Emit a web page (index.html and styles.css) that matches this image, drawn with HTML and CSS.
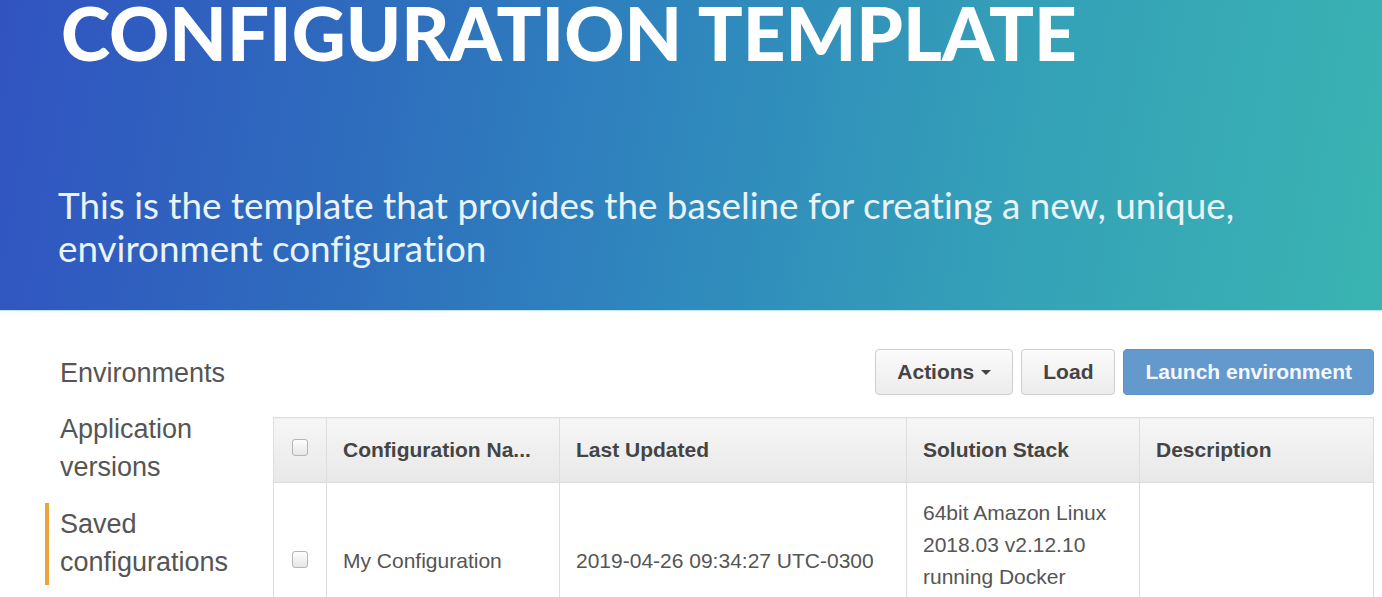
FILE: index.html
```html
<!DOCTYPE html>
<html>
<head>
<meta charset="utf-8">
<link rel="stylesheet" href="styles.css">
</head>
<body>
<header class="banner">
  <h1 class="title">CONFIGURATION TEMPLATE</h1>
  <p class="subtitle">This is the template that provides the baseline for creating a new, unique, environment configuration</p>
</header>
<main class="main">
  <nav class="sidebar">
    <div class="nav-item">Environments</div>
    <div class="nav-item">Application versions</div>
    <div class="nav-item active">Saved configurations</div>
  </nav>
  <section class="content">
    <div class="toolbar">
      <button class="btn">Actions <span class="caret"></span></button>
      <button class="btn">Load</button>
      <button class="btn btn-primary">Launch environment</button>
    </div>
    <table class="grid">
      <colgroup>
        <col class="c-check"><col class="c-name"><col class="c-date"><col class="c-stack"><col class="c-desc">
      </colgroup>
      <thead>
        <tr>
          <th class="check"><span class="box"></span></th>
          <th>Configuration Na...</th>
          <th>Last Updated</th>
          <th>Solution Stack</th>
          <th>Description</th>
        </tr>
      </thead>
      <tbody>
        <tr>
          <td class="check"><span class="box"></span></td>
          <td>My Configuration</td>
          <td>2019-04-26 09:34:27 UTC-0300</td>
          <td class="stack">64bit Amazon Linux 2018.03 v2.12.10 running Docker 18.06.1-ce</td>
          <td></td>
        </tr>
      </tbody>
    </table>
  </section>
</main>
</body>
</html>
```

FILE: styles.css
```css
* { box-sizing: border-box; }
html, body { margin: 0; padding: 0; background: #fff; overflow: hidden; }
body { width: 1382px; height: 597px; }

.banner {
  height: 311px;
  padding-left: 61px;
  background: linear-gradient(100deg, #3153c1 0%, #2e6bbd 25%, #2f86bd 48%, #34a0b8 72%, #3ab4b2 100%);
  border-bottom: 1px solid #bfe8ee;
  overflow: hidden;
}
.title {
  margin: 0;
  padding-top: 2px;
  font-family: Lato, "Open Sans", sans-serif;
  font-weight: 900;
  font-size: 74.5px;
  line-height: 60px;
  color: #fff;
}
.subtitle {
  margin: 122px 0 0 -3px;
  width: 1200px;
  font-family: Lato, "Open Sans", sans-serif;
  font-size: 36.8px;
  line-height: 43px;
  color: #eaf3f8;
  font-variant-ligatures: none;
  font-feature-settings: "liga" 0;
}

.main {
  display: flex;
  font-family: "Liberation Sans", Arial, sans-serif;
}
.sidebar {
  width: 273px;
  flex: none;
  padding: 43px 0 0 45px;
  display: flex;
  flex-direction: column;
  gap: 18px;
}
.nav-item {
  font-size: 27px;
  line-height: 38px;
  color: #555;
  padding-left: 11px;
  border-left: 4px solid transparent;
  width: 210px;
}
.nav-item.active {
  border-left-color: #e9a43c;
  padding-top: 2px;
  padding-bottom: 4px;
  margin-top: -1px;
}

.content {
  flex: 1;
  padding: 38px 9px 0 0;
}
.toolbar {
  display: flex;
  justify-content: flex-end;
  gap: 8px;
  margin-bottom: 22px;
}
.btn {
  height: 46px;
  padding: 0 21px;
  font-family: "Liberation Sans", Arial, sans-serif;
  font-weight: bold;
  font-size: 21px;
  color: #444;
  border: 1px solid #cfcfcf;
  border-radius: 4px;
  background: linear-gradient(#fbfbfb, #ececec);
  display: flex;
  align-items: center;
  gap: 7px;
}
.caret {
  width: 0; height: 0;
  border-left: 5px solid transparent;
  border-right: 5px solid transparent;
  border-top: 5px solid #444;
}
.btn-primary {
  color: #f4f8fc;
  background: #6399cd;
  border-color: #5c92c8;
}

.grid {
  width: 1100px;
  border-collapse: collapse;
  table-layout: fixed;
  border: 1px solid #dcdcdc;
  font-size: 21px;
}
.c-check { width: 53px; }
.c-name { width: 233px; }
.c-date { width: 347px; }
.c-stack { width: 233px; }
.c-desc { width: 234px; }
th, td {
  border-left: 1px solid #dedede;
  padding: 0 16px;
  text-align: left;
  white-space: nowrap;
  overflow: hidden;
}
th {
  height: 65px;
  font-weight: bold;
  color: #444;
  background: linear-gradient(#f6f6f6, #e8e8e8);
  border-bottom: 1px solid #dcdcdc;
}
td {
  height: 156px;
  color: #555;
  vertical-align: middle;
  padding-top: 14px;
  padding-bottom: 14px;
}
td.stack {
  white-space: normal;
  line-height: 32px;
}
.check { padding: 0; text-align: center; }
th.check .box { position: relative; top: -4px; }
td.check .box { position: relative; top: -3px; }
.box {
  display: inline-block;
  width: 16px;
  height: 17px;
  border: 1px solid #b5b5b5;
  border-radius: 3px;
  background: linear-gradient(#fdfdfd, #e6e6e6);
  vertical-align: middle;
}
```
